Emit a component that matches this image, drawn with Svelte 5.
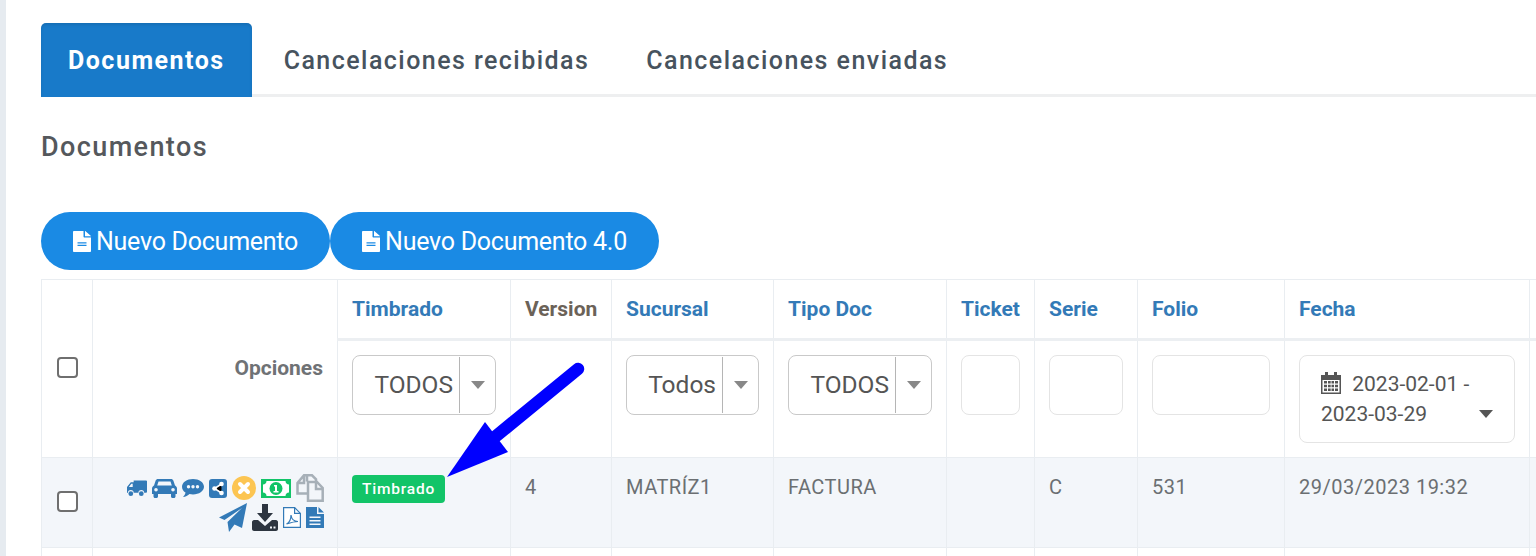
<script>
	const tabs = ['Documentos', 'Cancelaciones recibidas', 'Cancelaciones enviadas'];
	const widths = [51, 245, 173, 101, 162, 173, 88, 103, 147, 245, 120];
</script>

{#snippet fileIcon()}
	<svg class="btn-icon" viewBox="0 0 384 512" preserveAspectRatio="none"><path fill="#fff" fill-rule="evenodd" d="M224 0H24C11 0 0 11 0 24v464c0 13 11 24 24 24h336c13 0 24-11 24-24V160H248c-13 0-24-11-24-24V0zM384 122L262 0h-6v128h128v-6zM96 272h192v32H96zM96 336h192v32H96z"/></svg>
{/snippet}

{#snippet selectBox(label, width)}
	<div class="select" style="width: {width}px">
		<span class="select-text">{label}</span>
		<span class="select-arrow"><i class="caret"></i></span>
	</div>
{/snippet}

<div class="page">
	<div class="content">
		<nav class="tabs">
			{#each tabs as tab, i}
				<div class="tab" class:active={i === 0}>{tab}</div>
			{/each}
		</nav>

		<h2 class="title">Documentos</h2>

		<div class="actions">
			<button class="btn">{@render fileIcon()}Nuevo Documento</button>
			<button class="btn">{@render fileIcon()}Nuevo Documento 4.0</button>
		</div>

		<table class="grid">
			<colgroup>
				{#each widths as w}
					<col style="width: {w}px" />
				{/each}
			</colgroup>
			<thead>
				<tr class="heads">
					<th rowspan="2" class="center"><span class="check"></span></th>
					<th rowspan="2" class="options">Opciones</th>
					<th class="link">Timbrado</th>
					<th>Version</th>
					<th class="link">Sucursal</th>
					<th class="link">Tipo Doc</th>
					<th class="link">Ticket</th>
					<th class="link">Serie</th>
					<th class="link">Folio</th>
					<th class="link">Fecha</th>
					<th></th>
				</tr>
				<tr class="filters">
					<td>{@render selectBox('TODOS', 144)}</td>
					<td></td>
					<td>{@render selectBox('Todos', 133)}</td>
					<td>{@render selectBox('TODOS', 144)}</td>
					<td><div class="field"></div></td>
					<td><div class="field"></div></td>
					<td><div class="field"></div></td>
					<td>
						<div class="daterange">
							<svg class="cal" viewBox="0 0 20 22">
								<path fill="#555" fill-rule="evenodd" d="M4 0h3v3h6V0h3v3h4v19H0V3h4zM1.500 8v12.500h17V8z"/>
								<path fill="#555" d="M3 9h3v2.500H3zM7 9h2.700v2.500H7zM10.500 9H13v2.500h-2.500zM14 9h3v2.500h-3zM3 12.700h3v2.500H3zM7 12.700h2.700v2.500H7zM10.500 12.700H13v2.500h-2.500zM14 12.700h3v2.500h-3zM3 16.400h3v2.700H3zM7 16.400h2.700v2.700H7zM10.500 16.400H13v2.700h-2.500zM14 16.400h3v2.700h-3z"/>
							</svg>
							<span class="range-text">2023-02-01 -</span>
							<span class="range-text">2023-03-29</span>
							<i class="caret dark"></i>
						</div>
					</td>
					<td></td>
				</tr>
			</thead>
			<tbody>
				<tr class="row">
					<td class="center"><span class="check"></span></td>
					<td>
						<div class="icons">
							<svg width="20" height="18" viewBox="0 0 21 18"><path fill="#337ab7" d="M7 1h13a1 1 0 0 1 1 1v11a1 1 0 0 1-1 1h-2a3 3 0 0 0-6 0H7a3 3 0 0 0-6 0H0V8l4-5h3zM2 8h4V4.500H4.500z"/><circle cx="4" cy="15" r="2.500" fill="#337ab7"/><circle cx="15" cy="15" r="2.500" fill="#337ab7"/></svg>
							<svg width="25" height="19" viewBox="0 0 25 19"><path fill="#337ab7" fill-rule="evenodd" d="M6 0h13c1 0 2 .6 2.500 2L23 6.500c1 .5 2 1.500 2 3V15h-1.500v2.500c0 .8-.7 1.500-1.500 1.500h-1.500c-.8 0-1.500-.7-1.500-1.500V15H6v2.500C6 18.300 5.300 19 4.500 19H3c-.8 0-1.500-.7-1.500-1.500V15H0V9.500c0-1.500 1-2.500 2-3L3.500 2C4 .6 5 0 6 0zm.5 2.500L5.200 6.500h14.600L18.500 2.500zM4 9a1.800 1.800 0 1 0 0 3.600A1.800 1.800 0 0 0 4 9zm17 0a1.800 1.800 0 1 0 0 3.600A1.800 1.800 0 0 0 21 9z"/></svg>
							<svg width="22" height="18" viewBox="0 0 22 18"><path fill="#337ab7" fill-rule="evenodd" d="M11 0c6 0 11 3.400 11 7.700s-5 7.700-11 7.700c-1.200 0-2.400-.1-3.500-.4C6 16.500 3.500 18 1 18c1.200-1 2.300-2.500 2.500-4.400C1.300 12.200 0 10 0 7.700 0 3.400 5 0 11 0zM6.500 6a1.700 1.700 0 1 0 0 3.400 1.700 1.700 0 0 0 0-3.400zm4.500 0a1.700 1.700 0 1 0 0 3.400A1.700 1.700 0 0 0 11 6zm4.500 0a1.700 1.700 0 1 0 0 3.400 1.700 1.700 0 0 0 0-3.400z"/></svg>
							<svg width="18" height="19" viewBox="0 0 18 19"><rect width="18" height="19" rx="3" fill="#337ab7"/><path stroke="#fff" stroke-width="1.500" d="M12.500 5 5.500 9.500l7 4.500"/><circle cx="12.500" cy="5" r="2.300" fill="#fff"/><circle cx="5.500" cy="9.500" r="2.300" fill="#fff"/><circle cx="12.500" cy="14" r="2.300" fill="#fff"/></svg>
							<svg width="24" height="24" viewBox="0 0 24 24"><circle cx="12" cy="12" r="12" fill="#fcc552"/><path stroke="#fff" stroke-width="4" stroke-linecap="round" d="M8 8l8 8M16 8l-8 8"/></svg>
							<svg width="30" height="19" viewBox="0 0 30 19"><rect width="30" height="19" fill="#12c468"/><path fill="#fff" d="M5.500 2h19c0 2 1.500 3.500 3.500 3.500v8c-2 0-3.500 1.500-3.500 3.500h-19c0-2-1.500-3.500-3.500-3.500v-8C4 5.500 5.500 4 5.500 2z"/><circle cx="15" cy="9.500" r="6.500" fill="#12c468"/><path fill="#fff" d="M13 6h3v6h1.500v1.500h-5V12H14V7.500h-1z"/></svg>
							<svg width="28" height="28" viewBox="0 0 28 28"><path fill="none" stroke="#a7b0b8" stroke-width="2.500" d="M11 7.500V1.300h5l4 4v2.500M11 19.500H1.500V9L8 1.300h3M1.500 9H8V1.300"/><path fill="#f3f6fa" stroke="#a7b0b8" stroke-width="2.500" d="M12 8h9l5.700 6v12.700H12z"/><path fill="none" stroke="#a7b0b8" stroke-width="2.500" d="M20 8v7h7"/></svg>
							<svg width="28" height="29" viewBox="0 0 28 29"><path fill="#337ab7" d="M28 0 23 25l-7.500-3.500L10 29l-1.500-10L23 5 5.500 17 0 14.500z"/></svg>
							<svg width="26" height="27" viewBox="0 0 26 27"><path fill="#2d3540" d="M10 0h6v9h5l-8 9-8-9h5z"/><path fill="#2d3540" fill-rule="evenodd" d="M0 18c0-1 1-2 2-2h4l7 6 7-6h4c1 0 2 1 2 2v7c0 1-1 2-2 2H2c-1 0-2-1-2-2zm18 4.500v2h2v-2zm3.500 0v2h2v-2z"/></svg>
							<svg width="18" height="21" viewBox="0 0 18 21"><path fill="#fff" stroke="#337ab7" stroke-width="1.200" d="M.6.6h11l5.800 5.800v14H.6z"/><path fill="none" stroke="#337ab7" stroke-width="1.200" d="M11.600.6v5.800h5.800M3.500 17c3-1.500 4.500-5 4.500-9 .5 4 3 6.500 7 6.500-3.500 0-7 1-11.500 2.500z"/></svg>
							<svg width="18" height="21" viewBox="0 0 18 21"><path fill="#337ab7" fill-rule="evenodd" d="M0 0h11v7h7v14H0zM3.500 9.500v1.500h11V9.500zm0 3.500v1.500h11V13zm0 3.500V18h11v-1.500zM12.500 0 18 5.500h-5.500z"/></svg>
						</div>
					</td>
					<td><span class="badge">Timbrado</span></td>
					<td>4</td>
					<td>MATRÍZ1</td>
					<td>FACTURA</td>
					<td></td>
					<td>C</td>
					<td>531</td>
					<td>29/03/2023 19:32</td>
					<td></td>
				</tr>
				<tr class="next">
					{#each widths as _}
						<td></td>
					{/each}
				</tr>
			</tbody>
		</table>
	</div>

	<svg class="arrow" width="160" height="130" viewBox="0 0 160 130">
		<path d="M144 17 50 94" stroke="#0000ff" stroke-width="12.500" stroke-linecap="round" fill="none"/>
		<path d="M13 125 51 70 74 100z" fill="#0000ff"/>
	</svg>
</div>

<style>
	:global(body) {
		margin: 0;
		overflow: hidden;
		background: #fff;
		font-family: Roboto, 'Liberation Sans', sans-serif;
	}

	.page {
		position: relative;
		height: 556px;
		overflow: hidden;
		border-left: 6px solid #e6ebf0;
		box-sizing: border-box;
	}

	.content {
		padding: 23px 0 0 35px;
	}

	.tabs {
		display: flex;
		height: 74px;
		box-sizing: border-box;
		border-bottom: 3px solid #eeeff0;
	}

	.tab {
		height: 74px;
		box-sizing: border-box;
		padding: 21px 25px 0 32px;
		font-size: 25px;
		line-height: 34px;
		font-weight: 500;
		letter-spacing: 1.450px;
		color: #47535e;
	}

	.tab.active {
		padding: 21px 27px 0 27px;
		background: #187ac9;
		border-radius: 5px 5px 0 0;
		box-shadow: inset 0 2px 3px rgba(0, 0, 0, 0.1);
		color: #fff;
		font-weight: 700;
		letter-spacing: 1.500px;
	}

	.title {
		margin: 33px 0 0;
		font-size: 27px;
		line-height: 34px;
		font-weight: 500;
		letter-spacing: 1.400px;
		color: #55585c;
	}

	.actions {
		display: flex;
		margin-top: 48px;
	}

	.btn {
		display: flex;
		align-items: center;
		justify-content: center;
		height: 58px;
		padding: 0 32px;
		border: 0;
		border-radius: 29px;
		background: #1a8ae4;
		color: #fff;
		font-family: inherit;
		font-size: 25px;
		letter-spacing: -0.250px;
	}

	.btn-icon {
		width: 18px;
		height: 21px;
		margin-right: 5px;
	}

	.grid {
		table-layout: fixed;
		width: 1608px;
		margin-top: 9px;
		border-collapse: collapse;
		font-size: 20px;
		color: #6b6f72;
	}

	th,
	td {
		padding: 0 14px;
		border: 1px solid #e9edf1;
		box-sizing: border-box;
		text-align: left;
		vertical-align: top;
	}

	th {
		font-size: 21px;
		font-weight: 700;
		color: #6b6258;
	}

	.heads th {
		height: 59px;
		line-height: 58px;
		vertical-align: top;
		padding-top: 0;
	}

	.heads th.center,
	.heads th.options {
		vertical-align: middle;
		line-height: 24px;
		padding-bottom: 2px;
	}

	.heads th.options {
		text-align: right;
		padding-right: 14px;
		color: #6f7275;
	}

	th.link {
		color: #337ab7;
	}

	.heads th:not([rowspan]) {
		border-bottom: 3px solid #eceff2;
	}

	.filters td {
		height: 118px;
		padding-top: 14px;
	}

	.center {
		padding: 0;
	}

	.check {
		display: block;
		width: 21px;
		height: 21px;
		margin: 0 auto;
		box-sizing: border-box;
		border: 2px solid #6f6f6f;
		border-radius: 4px;
		background: #fff;
	}

	.select {
		display: flex;
		height: 60px;
		box-sizing: border-box;
		border: 1px solid #c9c9c9;
		border-radius: 8px;
		background: #fff;
		align-items: center;
		justify-content: flex-end;
	}

	.select-text {
		font-size: 24.500px;
		font-weight: 400;
		color: #555;
		padding: 0 6px 2px 0;
	}

	.select-arrow {
		display: flex;
		align-items: center;
		justify-content: center;
		width: 36px;
		height: 56px;
		border-left: 1px solid #b5b5b5;
		box-sizing: border-box;
	}

	.caret {
		display: block;
		width: 0;
		height: 0;
		border-left: 7px solid transparent;
		border-right: 7px solid transparent;
		border-top: 8px solid #888;
	}

	.field {
		height: 60px;
		box-sizing: border-box;
		border: 1px solid #e4e4e4;
		border-radius: 8px;
	}

	.daterange {
		position: relative;
		width: 216px;
		height: 88px;
		box-sizing: border-box;
		border: 1px solid #e4e4e4;
		border-radius: 8px;
		padding: 13px 21px;
		font-size: 21px;
		line-height: 30px;
		color: #555;
	}

	.cal {
		width: 20px;
		height: 22px;
		margin-right: 6px;
		vertical-align: -3px;
	}

	.range-text {
		display: inline;
	}

	.caret.dark {
		position: absolute;
		right: 21px;
		bottom: 24px;
		border-top-color: #555;
	}

	.row td {
		height: 90px;
		background: #f3f6fa;
		padding-top: 16px;
		line-height: 26px;
		letter-spacing: 0.5px;
	}

	.row td.center {
		padding: 0 0 2px;
		vertical-align: middle;
	}

	.next td {
		height: 60px;
	}

	.icons {
		display: flex;
		flex-wrap: wrap;
		justify-content: flex-end;
		align-items: center;
		gap: 1px 5px;
		margin: 0 -1px 0 0;
	}

	.badge {
		display: inline-block;
		height: 28px;
		padding: 0 10px;
		border-radius: 4px;
		background: #12c468;
		color: #fff;
		font-size: 15.500px;
		font-weight: 500;
		line-height: 28px;
		letter-spacing: 0.800px;
	}

	.arrow {
		position: absolute;
		left: 428px;
		top: 352px;
	}
</style>
